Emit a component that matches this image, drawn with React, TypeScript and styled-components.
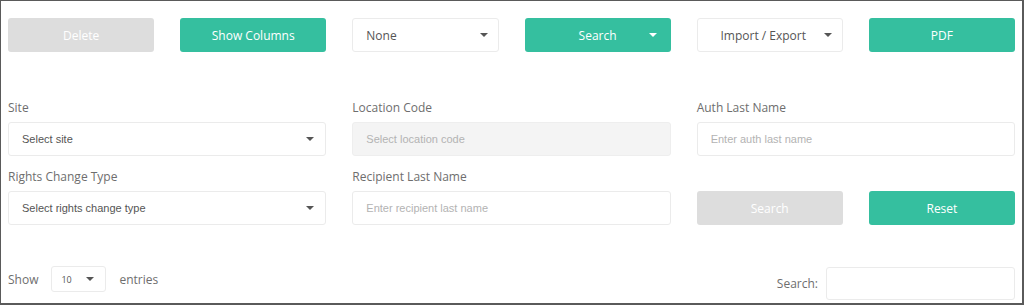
import React from "react";
import styled, { createGlobalStyle } from "styled-components";

const GlobalStyle = createGlobalStyle`
  html, body { margin: 0; padding: 0; background: #ffffff; }
  body { font-family: "Open Sans", "Noto Sans", sans-serif; }
  * { box-sizing: border-box; }
`;

const TEAL = "#35bf9f";

const Frame = styled.div`
  width: 1024px;
  height: 305px;
  overflow: hidden;
  border-style: solid;
  border-color: #5a5a5a;
  border-width: 1px 2px 2px 1px;
  background: #fff;
  padding: 17px 7px 0 7px;
`;

const Grid = styled.div<{ $top?: number; $rowGap?: number }>`
  display: grid;
  grid-template-columns: repeat(6, 1fr);
  column-gap: 26px;
  row-gap: ${(p) => p.$rowGap ?? 0}px;
  margin-top: ${(p) => p.$top ?? 0}px;
`;

const Button = styled.button<{ $muted?: boolean; $bottom?: boolean }>`
  position: relative;
  height: 34px;
  border: none;
  border-radius: 3px;
  background: ${(p) => (p.$muted ? "#dddddd" : TEAL)};
  color: #ffffff;
  font-family: "Open Sans", "Noto Sans", sans-serif;
  font-size: 12px;
  font-weight: 500;
  display: flex;
  align-items: center;
  justify-content: center;
  padding: 0;
  align-self: ${(p) => (p.$bottom ? "end" : "auto")};
`;

const Caret = styled.span<{ $light?: boolean }>`
  display: inline-block;
  flex: none;
  width: 0;
  height: 0;
  border-left: 4px solid transparent;
  border-right: 4px solid transparent;
  border-top: 4px solid ${(p) => (p.$light ? "#ffffff" : "#555555")};
`;

const ButtonCaret = styled(Caret)`
  position: absolute;
  right: 14px;
  top: 15px;
`;

const SelectBox = styled.div`
  height: 34px;
  border: 1px solid #ebebeb;
  border-radius: 3px;
  background: #fff;
  display: flex;
  align-items: center;
  padding: 0 10px 0 13px;
  color: #555;
  font-size: 12px;
  gap: 8px;
  justify-content: space-between;
`;

const CenterText = styled.span`
  flex: 1;
  text-align: center;
`;

const Field = styled.div`
  grid-column: span 2;
  display: flex;
  flex-direction: column;
`;

const Label = styled.label`
  height: 18px;
  line-height: 18px;
  margin-bottom: 5px;
  font-size: 12px;
  color: #6e6e6e;
`;

const FieldSelect = styled.div`
  height: 34px;
  border: 1px solid #ebebeb;
  border-radius: 3px;
  display: flex;
  align-items: center;
  justify-content: space-between;
  padding: 0 11px 0 13px;
  font-family: "Liberation Sans", Arial, sans-serif;
  font-size: 11px;
  color: #555;
`;

const TextInput = styled.input`
  height: 34px;
  width: 100%;
  border: 1px solid #ebebeb;
  border-radius: 3px;
  padding: 0 13px;
  font-family: "Liberation Sans", Arial, sans-serif;
  font-size: 11px;
  color: #555;
  background: #fff;
  outline: none;
  &::placeholder { color: #b3b3b3; }
  &:disabled { background: #f4f4f4; border-color: #eeeeee; }
`;

const Footer = styled.div`
  margin-top: 41px;
  display: flex;
  justify-content: space-between;
  align-items: flex-start;
`;

const Group = styled.div<{ $gap: number; $top?: number }>`
  display: flex;
  align-items: center;
  gap: ${(p) => p.$gap}px;
  margin-top: ${(p) => p.$top ?? 0}px;
  font-size: 12px;
  color: #6e6e6e;
`;

const SmallSelect = styled.div`
  width: 55px;
  height: 26px;
  border: 1px solid #ebebeb;
  border-radius: 3px;
  display: flex;
  align-items: center;
  justify-content: space-between;
  padding: 0 11px 0 9px;
  font-size: 9px;
  color: #555;
`;

const SearchInput = styled.input`
  width: 189px;
  height: 33px;
  border: 1px solid #ebebeb;
  border-radius: 3px;
  outline: none;
`;

export default function App() {
  return (
    <>
      <GlobalStyle />
      <Frame>
        <Grid>
          <Button $muted>Delete</Button>
          <Button>Show Columns</Button>
          <SelectBox>
            <span>None</span>
            <Caret />
          </SelectBox>
          <Button>
            Search
            <ButtonCaret $light />
          </Button>
          <SelectBox>
            <CenterText>Import / Export</CenterText>
            <Caret />
          </SelectBox>
          <Button>PDF</Button>
        </Grid>

        <Grid $top={47} $rowGap={12}>
          <Field>
            <Label>Site</Label>
            <FieldSelect>
              <span>Select site</span>
              <Caret />
            </FieldSelect>
          </Field>
          <Field>
            <Label>Location Code</Label>
            <TextInput disabled placeholder="Select location code" />
          </Field>
          <Field>
            <Label>Auth Last Name</Label>
            <TextInput placeholder="Enter auth last name" />
          </Field>
          <Field>
            <Label>Rights Change Type</Label>
            <FieldSelect>
              <span>Select rights change type</span>
              <Caret />
            </FieldSelect>
          </Field>
          <Field>
            <Label>Recipient Last Name</Label>
            <TextInput placeholder="Enter recipient last name" />
          </Field>
          <Button $muted $bottom>Search</Button>
          <Button $bottom>Reset</Button>
        </Grid>

        <Footer>
          <Group $gap={13}>
            <span>Show</span>
            <SmallSelect>
              <span>10</span>
              <Caret />
            </SmallSelect>
            <span>entries</span>
          </Group>
          <Group $gap={8} $top={1}>
            <span>Search:</span>
            <SearchInput />
          </Group>
        </Footer>
      </Frame>
    </>
  );
}
